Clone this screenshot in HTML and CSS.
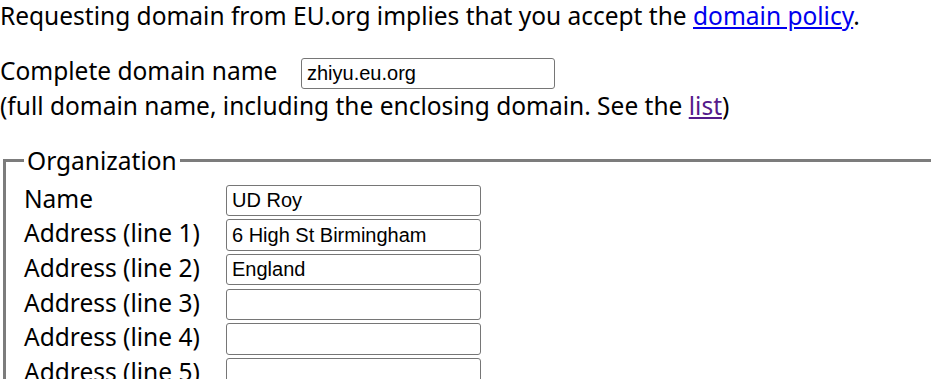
FILE: index.html
```html
<!DOCTYPE html>
<html lang="en">
<head>
<meta charset="utf-8">
<title>Request domain</title>
<link rel="stylesheet" href="styles.css">
</head>
<body>
<p class="intro">Requesting domain from EU.org implies that you accept the <a class="link" href="#policy">domain policy</a>.</p>
<div class="domain-row">
  <label class="domain-label" for="fqdn">Complete domain name</label>
  <input class="field domain-field" id="fqdn" type="text" value="zhiyu.eu.org">
</div>
<div class="hint">(full domain name, including the enclosing domain. See the <a class="link visited" href="#list">list</a>)</div>
<fieldset class="org">
  <legend class="org-legend">Organization</legend>
  <div class="org-grid">
    <label class="org-label" for="f1">Name</label>
    <input class="field" id="f1" type="text" value="UD Roy">
    <label class="org-label" for="f2">Address (line 1)</label>
    <input class="field" id="f2" type="text" value="6 High St Birmingham">
    <label class="org-label" for="f3">Address (line 2)</label>
    <input class="field" id="f3" type="text" value="England">
    <label class="org-label" for="f4">Address (line 3)</label>
    <input class="field" id="f4" type="text" value="">
    <label class="org-label" for="f5">Address (line 4)</label>
    <input class="field" id="f5" type="text" value="">
    <label class="org-label" for="f6">Address (line 5)</label>
    <input class="field" id="f6" type="text" value="">
  </div>
</fieldset>
</body>
</html>
```
FILE: styles.css
```css
html, body {
  margin: 0;
  padding: 0;
  background: #ffffff;
}
body {
  height: 379px;
  overflow: hidden;
  font-family: "Noto Sans", "Open Sans", sans-serif;
  font-size: 24.5px;
  color: #000000;
}
.intro {
  margin: 0 0 22px 0;
  line-height: 32px;
  white-space: nowrap;
}
.link {
  color: #0000ee;
  text-decoration: underline;
}
.link.visited {
  color: #551a8b;
}
.domain-row {
  display: flex;
  align-items: baseline;
}
.domain-label {
  line-height: 33px;
  width: 301px;
  flex: none;
}
.field {
  box-sizing: border-box;
  width: 255px;
  height: 31.5px;
  margin: 0;
  padding: 0 5px;
  border: 1px solid #767676;
  border-radius: 3px;
  background: #ffffff;
  font-family: "Liberation Sans", Arial, sans-serif;
  font-size: 20px;
  color: #000000;
}
.domain-field {
  width: 254px;
}
.hint {
  line-height: 33px;
  white-space: nowrap;
}
.org {
  margin: 22.5px -20px 0 3px;
  padding: 8px 0 20px 18px;
  border: 3px solid #7c7c7c;
}
.org-legend {
  padding: 0 3px;
  line-height: 32px;
}
.org-grid {
  display: grid;
  grid-template-columns: 202px 255px;
  grid-auto-rows: 31.5px;
  row-gap: 3.1px;
}
.org-label {
  line-height: 27px;
  align-self: start;
  white-space: nowrap;
}
```
